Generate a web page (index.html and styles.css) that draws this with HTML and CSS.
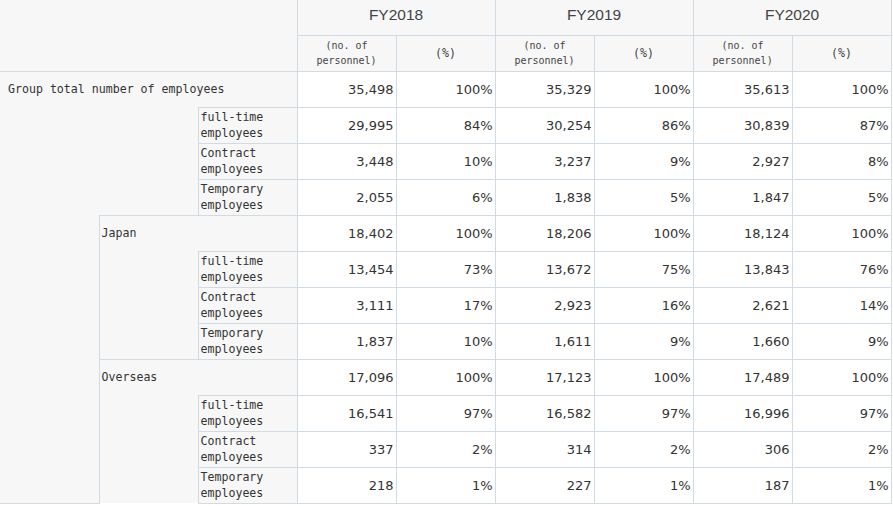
FILE: index.html
```html
<!DOCTYPE html>
<html>
<head>
<meta charset="utf-8">
<link rel="stylesheet" href="styles.css">
</head>
<body>
<table class="emp">
  <colgroup>
    <col class="c"><col class="c"><col class="c"><col class="c"><col class="c"><col class="c"><col class="c"><col class="c"><col class="c">
  </colgroup>
  <thead>
    <tr class="h1">
      <th class="corner" colspan="3" rowspan="2"></th>
      <th class="fy" colspan="2">FY2018</th>
      <th class="fy" colspan="2">FY2019</th>
      <th class="fy" colspan="2">FY2020</th>
    </tr>
    <tr class="h2">
      <th class="sub">(no. of<br>personnel)</th><th class="sub pct">(%)</th>
      <th class="sub">(no. of<br>personnel)</th><th class="sub pct">(%)</th>
      <th class="sub">(no. of<br>personnel)</th><th class="sub pct">(%)</th>
    </tr>
  </thead>
  <tbody>
    <tr>
      <th class="lab" colspan="3">Group total number of employees</th>
      <td>35,498</td><td>100%</td><td>35,329</td><td>100%</td><td>35,613</td><td>100%</td>
    </tr>
    <tr>
      <th class="blank b-top" colspan="2" rowspan="3"></th>
      <th class="lab3">full-time<br>employees</th>
      <td>29,995</td><td>84%</td><td>30,254</td><td>86%</td><td>30,839</td><td>87%</td>
    </tr>
    <tr>
      <th class="lab3">Contract<br>employees</th>
      <td>3,448</td><td>10%</td><td>3,237</td><td>9%</td><td>2,927</td><td>8%</td>
    </tr>
    <tr>
      <th class="lab3">Temporary<br>employees</th>
      <td>2,055</td><td>6%</td><td>1,838</td><td>5%</td><td>1,847</td><td>5%</td>
    </tr>
    <tr>
      <th class="blank b-left" rowspan="8"></th>
      <th class="lab2" colspan="2">Japan</th>
      <td>18,402</td><td>100%</td><td>18,206</td><td>100%</td><td>18,124</td><td>100%</td>
    </tr>
    <tr>
      <th class="blank b-side" rowspan="3"></th>
      <th class="lab3">full-time<br>employees</th>
      <td>13,454</td><td>73%</td><td>13,672</td><td>75%</td><td>13,843</td><td>76%</td>
    </tr>
    <tr>
      <th class="lab3">Contract<br>employees</th>
      <td>3,111</td><td>17%</td><td>2,923</td><td>16%</td><td>2,621</td><td>14%</td>
    </tr>
    <tr>
      <th class="lab3">Temporary<br>employees</th>
      <td>1,837</td><td>10%</td><td>1,611</td><td>9%</td><td>1,660</td><td>9%</td>
    </tr>
    <tr>
      <th class="lab2" colspan="2">Overseas</th>
      <td>17,096</td><td>100%</td><td>17,123</td><td>100%</td><td>17,489</td><td>100%</td>
    </tr>
    <tr>
      <th class="blank b-side" rowspan="3"></th>
      <th class="lab3">full-time<br>employees</th>
      <td>16,541</td><td>97%</td><td>16,582</td><td>97%</td><td>16,996</td><td>97%</td>
    </tr>
    <tr>
      <th class="lab3">Contract<br>employees</th>
      <td>337</td><td>2%</td><td>314</td><td>2%</td><td>306</td><td>2%</td>
    </tr>
    <tr>
      <th class="lab3">Temporary<br>employees</th>
      <td>218</td><td>1%</td><td>227</td><td>1%</td><td>187</td><td>1%</td>
    </tr>
  </tbody>
</table>
</body>
</html>
```
FILE: styles.css
```css
html, body {
  margin: 0;
  padding: 0;
  background: #ffffff;
}

.emp {
  border-collapse: collapse;
  table-layout: fixed;
  width: 891px;
  color: #333333;
}

.emp .c {
  width: 99px;
}

.emp th,
.emp td {
  padding: 0;
  border: 1px solid #d0dbe3;
  vertical-align: middle;
  font-weight: normal;
}

.emp th {
  background: #f7f7f7;
}

.emp .h1 {
  height: 35px;
}

.emp .h2 {
  height: 36px;
}

.emp tbody tr {
  height: 36px;
}

.emp .corner {
  border-top-style: hidden;
  border-left-style: hidden;
}

.emp .fy {
  font-family: "Liberation Sans", Arial, sans-serif;
  font-size: 15.5px;
  color: #444444;
  text-align: center;
  border-top-style: hidden;
  padding-bottom: 4px;
}

.emp .sub {
  font-family: "DejaVu Sans Mono", monospace;
  font-size: 10px;
  line-height: 15px;
  color: #444444;
  text-align: center;
}

.emp .sub.pct {
  font-size: 11.6px;
}

.emp .lab,
.emp .lab2,
.emp .lab3 {
  font-family: "DejaVu Sans Mono", monospace;
  font-size: 11.6px;
  line-height: 16px;
  color: #333333;
  text-align: left;
}

.emp .lab {
  padding-left: 8px;
  border-left-style: hidden;
}

.emp .lab2,
.emp .lab3 {
  padding-left: 2px;
}

/* Blank spacer cells that indent the row hierarchy */
.emp .blank.b-top {
  border-left-style: hidden;
  border-top-style: hidden;
  border-bottom-style: none;
}

.emp .blank.b-left {
  border-left-style: hidden;
  border-top-style: hidden;
}

.emp .blank.b-side {
  border-top-style: hidden;
  border-bottom-style: none;
}

.emp td {
  font-family: "DejaVu Sans", Verdana, sans-serif;
  font-size: 13px;
  color: #333333;
  text-align: right;
  padding-right: 2px;
  background: #ffffff;
}
```
